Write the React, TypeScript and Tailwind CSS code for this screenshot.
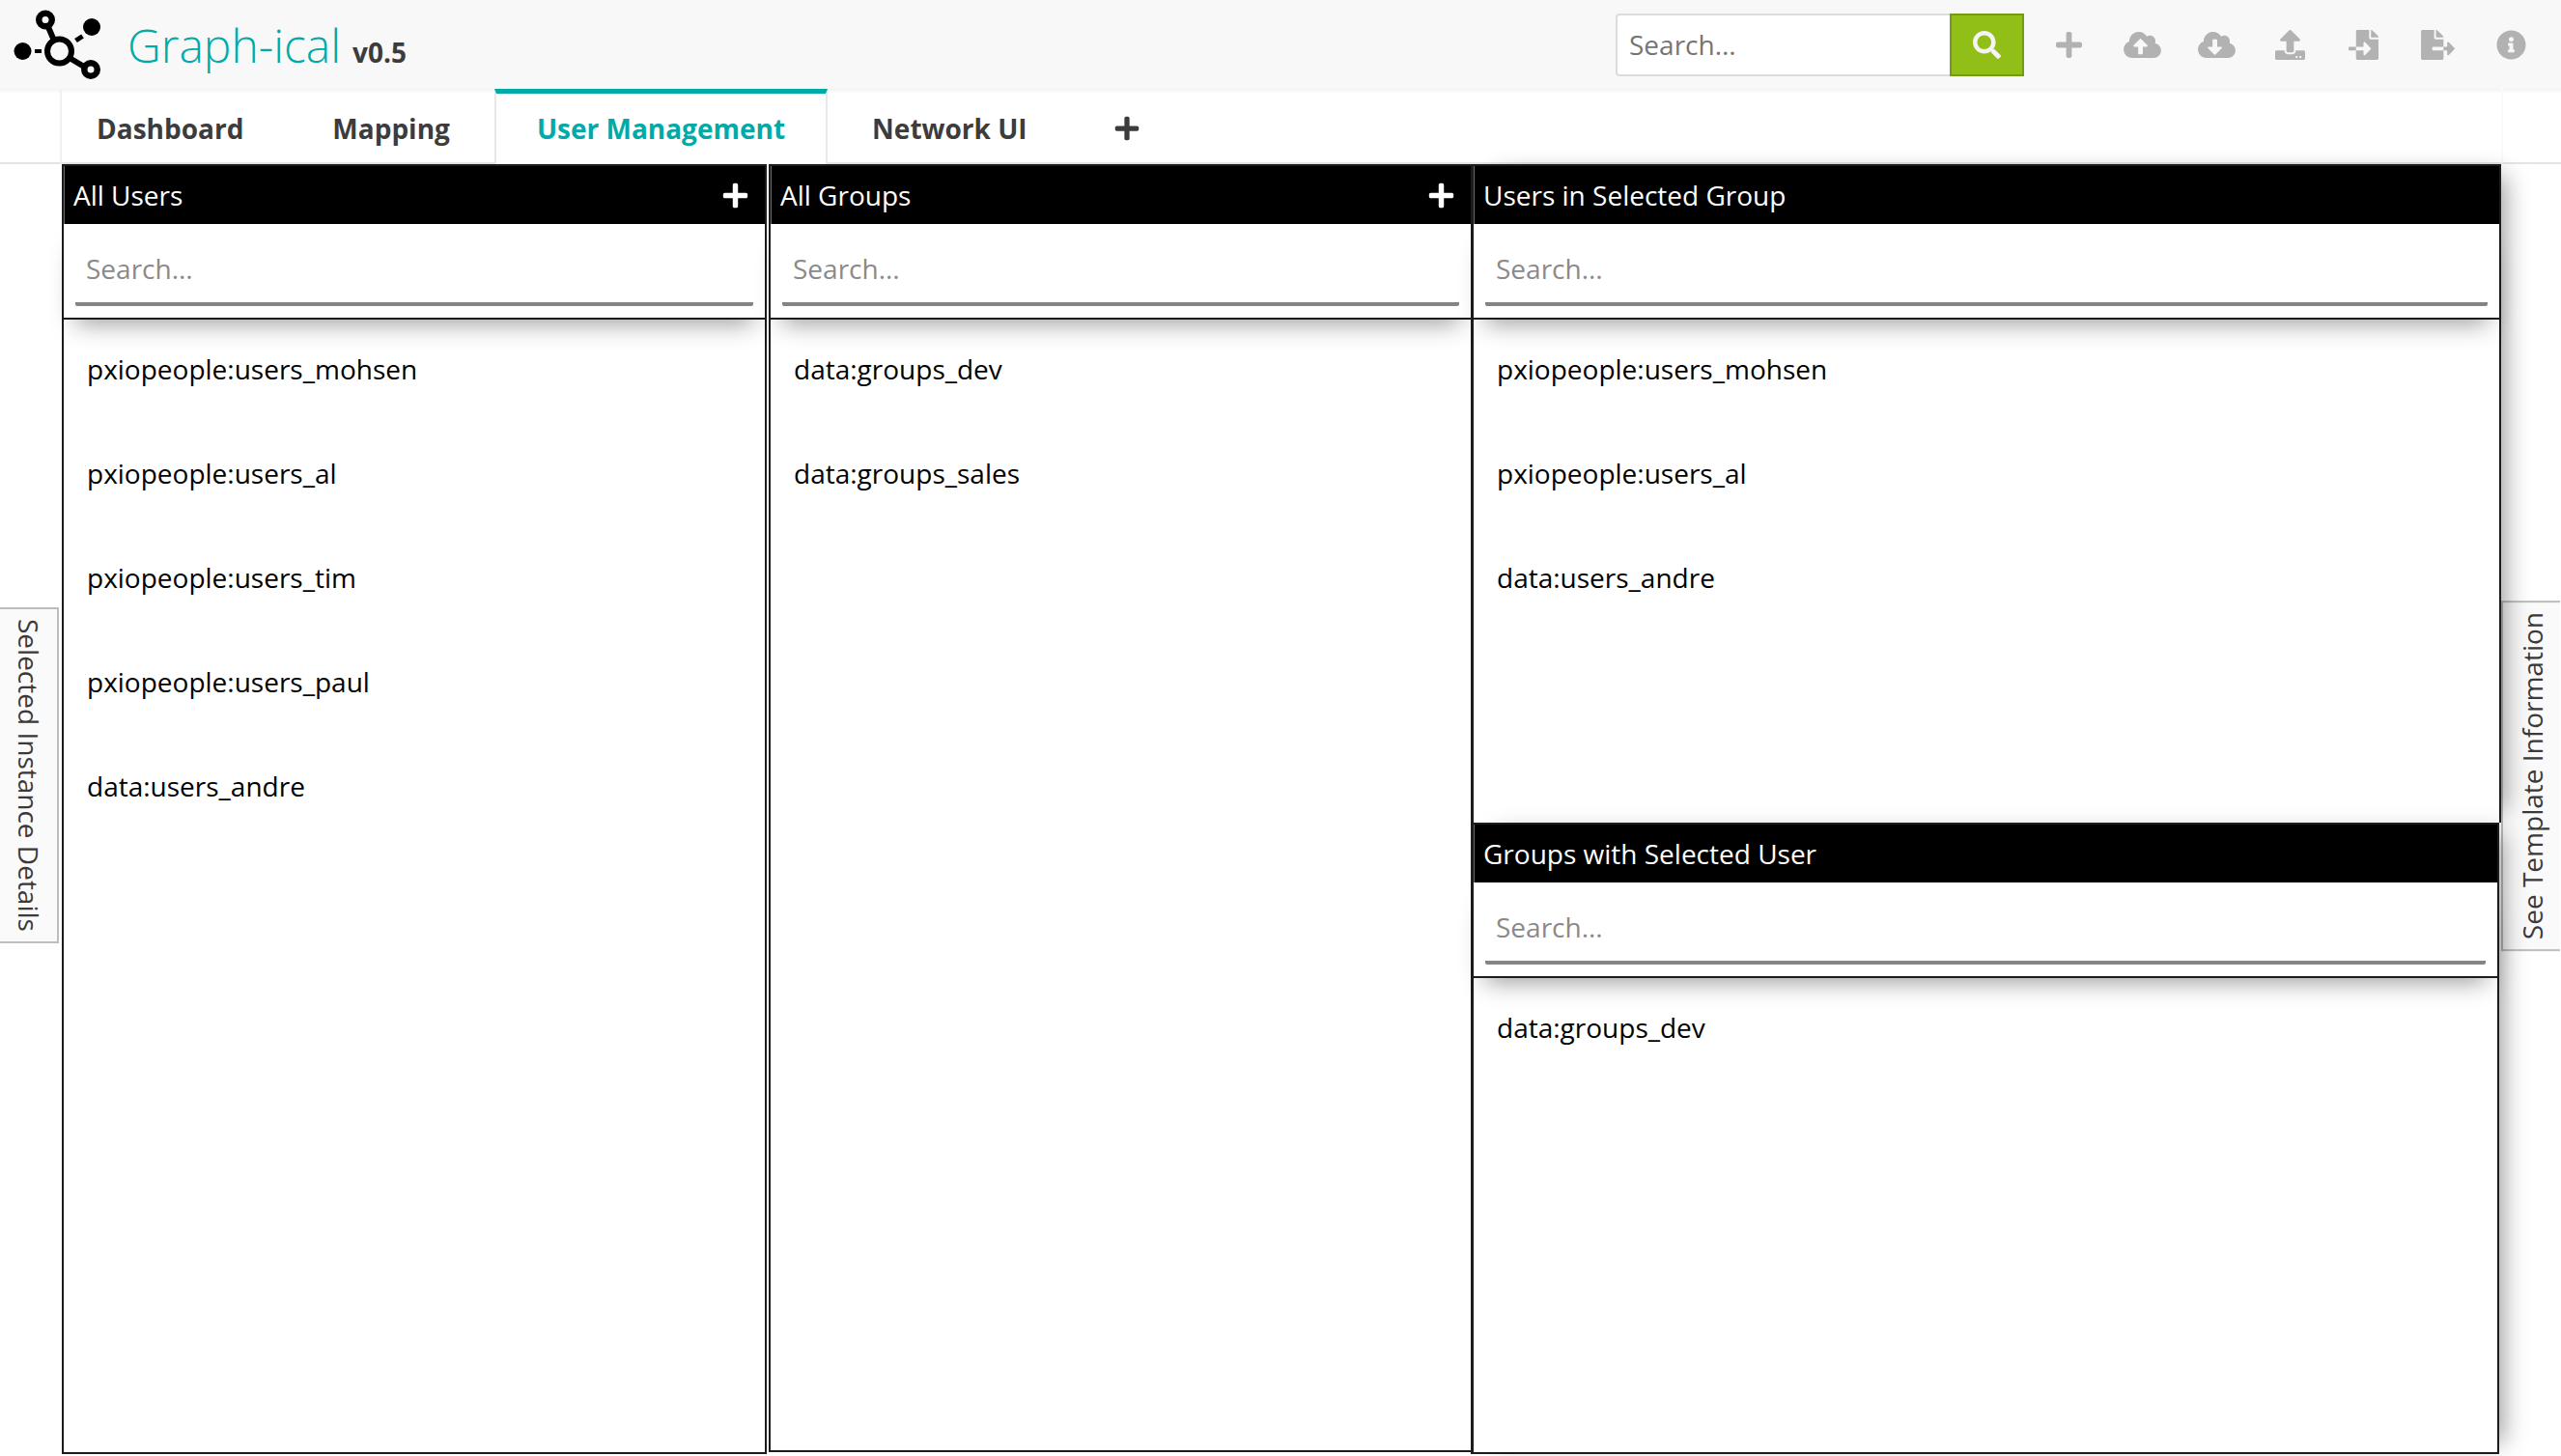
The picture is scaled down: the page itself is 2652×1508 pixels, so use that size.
import type { ReactNode } from "react";
import {
  FaCloudDownloadAlt,
  FaCloudUploadAlt,
  FaFileExport,
  FaFileImport,
  FaInfoCircle,
  FaPlus,
  FaSearch,
  FaUpload,
} from "react-icons/fa";

const tools = [
  { label: "Add", Icon: FaPlus, size: "h-[31px] w-[27px]" },
  { label: "Upload to cloud", Icon: FaCloudUploadAlt, size: "h-[31px] w-[39px]" },
  { label: "Download from cloud", Icon: FaCloudDownloadAlt, size: "h-[31px] w-[39px]" },
  { label: "Upload", Icon: FaUpload, size: "h-[31px] w-[31px]" },
  { label: "Import file", Icon: FaFileImport, size: "h-[31px] w-[31px]" },
  { label: "Export file", Icon: FaFileExport, size: "h-[31px] w-[35px]" },
  { label: "Information", Icon: FaInfoCircle, size: "h-[31px] w-[31px]" },
];

const tabs = ["Dashboard", "Mapping", "User Management", "Network UI"];
const activeTab = "User Management";

function Logo() {
  return (
    <svg viewBox="0 0 92 74" className="h-[74px] w-[92px]" aria-hidden="true">
      <g fill="none" stroke="#000">
        <circle cx="33" cy="11.5" r="6.75" strokeWidth="6.5" />
        <circle cx="47.5" cy="44" r="12.5" strokeWidth="6" />
        <circle cx="80" cy="63" r="6.75" strokeWidth="6.5" />
        <path d="M36 19L42 33M58 51L73 60" strokeWidth="6" />
        <path d="M64.5 33L71.5 28.5" strokeWidth="5" />
        <path d="M22 44H29" strokeWidth="4" />
      </g>
      <circle cx="81" cy="19" r="9" />
      <circle cx="9.5" cy="44" r="9" />
    </svg>
  );
}

interface PanelProps {
  title: string;
  items: string[];
  addable?: boolean;
  className: string;
}

function Panel({ title, items, addable, className }: PanelProps) {
  return (
    <section aria-label={title} className={`flex flex-col border-[#1c1c1c] bg-white ${className}`}>
      <header className="flex h-15 items-center justify-between border-l border-[#666] bg-black pr-4 pl-[9px] text-white">
        <h2>{title}</h2>
        {addable && (
          <button type="button" aria-label={`Add to ${title}`}>
            <FaPlus className="size-[29px]" />
          </button>
        )}
      </header>
      <div className="border-b-2 border-[#1c1c1c] px-3 pt-2.5 pb-3 shadow-[0_16px_24px_-12px_rgba(0,0,0,0.4)]">
        <input
          type="text"
          aria-label={`Search ${title}`}
          placeholder="Search..."
          className="h-[75px] w-full rounded-xs border-b-4 border-[#848484] px-[11px] outline-none placeholder:text-[#8a8a8a]"
        />
      </div>
      <ul className="-mt-[3px]">
        {items.map((item) => (
          <li key={item}>
            <button type="button" className="h-27 w-full px-6 text-left">
              {item}
            </button>
          </li>
        ))}
      </ul>
    </section>
  );
}

function SideTab({ children, className }: { children: ReactNode; className: string }) {
  return (
    <button
      type="button"
      className={`border-2 border-[#bdbdbd] bg-[#fafafa] pt-2.5 pb-2.5 leading-10 whitespace-nowrap text-[#3a3a3a] [writing-mode:vertical-rl] ${className}`}
    >
      {children}
    </button>
  );
}

export default function App() {
  return (
    <div className="flex min-h-screen flex-col bg-white font-['Open_Sans',sans-serif] text-[28px] leading-9 text-black">
      <header className="flex h-[92px] items-center justify-between bg-[#f8f8f8] pr-[13px] pl-3.5">
        <div className="flex items-center">
          <Logo />
          <h1 className="ml-[26px] flex items-baseline gap-3 pt-2 text-[48px] leading-16 font-light text-[#00aaa8]">
            Graph-ical <span className="text-[28px] font-bold text-[#3c3c3c]">v0.5</span>
          </h1>
        </div>
        <div className="flex items-center">
          <form className="flex h-[65px]" role="search">
            <input
              type="text"
              aria-label="Search"
              placeholder="Search..."
              className="w-[346px] rounded-l-sm border-2 border-r-0 border-[#dcdcdc] bg-white px-3 outline-none placeholder:text-[#757575]"
            />
            <button
              type="button"
              aria-label="Run search"
              className="flex w-[77px] items-center justify-center border-2 border-[#759a15] bg-[#91be17] text-[#f4f4f4]"
            >
              <FaSearch className="size-[29px]" />
            </button>
          </form>
          <div className="ml-2 grid w-[535px] grid-cols-7 text-[#b2b2b2]">
            {tools.map(({ label, Icon, size }) => (
              <button key={label} type="button" aria-label={label} className="flex justify-center">
                <Icon className={size} />
              </button>
            ))}
          </div>
        </div>
      </header>

      <nav className="flex h-[78px] bg-linear-to-b from-[#f2f2f2] to-white to-[5px]">
        <div className="w-16 border-r-2 border-b-2 border-r-[#f0f0f0] border-b-[#e4e4e4]" />
        {tabs.map((tab) => (
          <button
            key={tab}
            type="button"
            className={
              tab === activeTab
                ? "border-x-2 border-t-[5px] border-x-[#e8e8e8] border-t-[#00aaa8] bg-white px-[42px] pb-0.5 font-bold text-[#00aaa8]"
                : "border-b-2 border-[#e4e4e4] px-[46px] pt-[5px] font-bold text-[#3c3c3c] nth-2:pl-9"
            }
          >
            {tab}
          </button>
        ))}
        <div className="flex flex-1 border-b-2 border-[#e4e4e4] pt-[5px] pl-[43px]">
          <button type="button" aria-label="Add tab" className="text-[#3c3c3c]">
            <FaPlus className="size-7" />
          </button>
        </div>
        <div className="w-[62px] border-b-2 border-l-2 border-b-[#e4e4e4] border-l-[#fafafa]" />
      </nav>

      <div className="flex flex-1 pb-0.5">
        <aside className="w-16 pt-[459px]">
          <SideTab className="w-[61px] border-l-0">Selected Instance Details</SideTab>
        </aside>
        <main className="relative z-10 grid flex-1 grid-cols-[732fr_727fr_1067fr]">
          <Panel
            title="All Users"
            addable
            className="mr-0.5 border-2"
            items={[
              "pxiopeople:users_mohsen",
              "pxiopeople:users_al",
              "pxiopeople:users_tim",
              "pxiopeople:users_paul",
              "data:users_andre",
            ]}
          />
          <Panel
            title="All Groups"
            addable
            className="mb-0.5 border-2 border-r-0"
            items={["data:groups_dev", "data:groups_sales"]}
          />
          <div className="grid grid-rows-[682fr_654fr]">
            <Panel
              title="Users in Selected Group"
              className="border-2 border-b-0 border-l-[3px] shadow-[16px_0_24px_-12px_rgba(0,0,0,0.4)]"
              items={["pxiopeople:users_mohsen", "pxiopeople:users_al", "data:users_andre"]}
            />
            <Panel
              title="Groups with Selected User"
              className="mr-0.5 border-2 border-l-[3px] shadow-[16px_0_24px_-12px_rgba(0,0,0,0.4)]"
              items={["data:groups_dev"]}
            />
          </div>
        </main>
        <aside className="w-[62px] pt-[452px]">
          <SideTab className="w-[61px] rotate-180 border-l-0">See Template Information</SideTab>
        </aside>
      </div>
    </div>
  );
}
